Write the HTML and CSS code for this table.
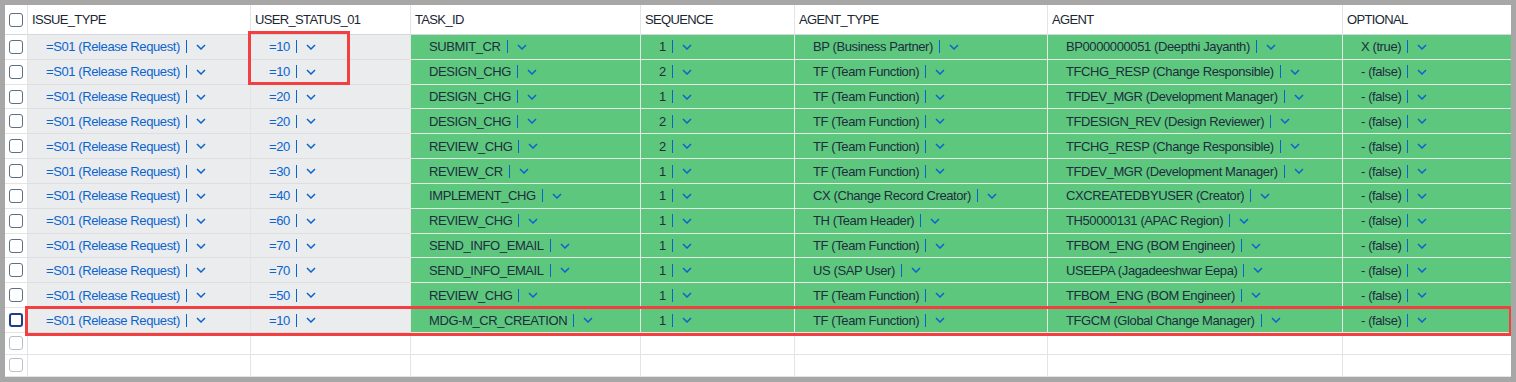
FILE: index.html
```html
<!DOCTYPE html>
<html>
<head>
<meta charset="utf-8">
<link rel="stylesheet" href="styles.css">
</head>
<body>
<div class="table">
  <div class="row head">
    <div class="c cb"><span class="box"></span></div>
    <div class="c">ISSUE_TYPE</div>
    <div class="c">USER_STATUS_01</div>
    <div class="c">TASK_ID</div>
    <div class="c">SEQUENCE</div>
    <div class="c">AGENT_TYPE</div>
    <div class="c">AGENT</div>
    <div class="c">OPTIONAL</div>
  </div>

  <div class="row data">
    <div class="c cb"><span class="box"></span></div>
    <div class="c g"><span class="v">=S01 (Release Request)</span><i class="bar"></i><svg class="chev" viewBox="0 0 10 6"><path d="M1 1l4 4 4-4"/></svg></div>
    <div class="c g"><span class="v">=10</span><i class="bar"></i><svg class="chev" viewBox="0 0 10 6"><path d="M1 1l4 4 4-4"/></svg></div>
    <div class="c k"><span class="v">SUBMIT_CR</span><i class="bar"></i><svg class="chev" viewBox="0 0 10 6"><path d="M1 1l4 4 4-4"/></svg></div>
    <div class="c k"><span class="v">1</span><i class="bar"></i><svg class="chev" viewBox="0 0 10 6"><path d="M1 1l4 4 4-4"/></svg></div>
    <div class="c k"><span class="v">BP (Business Partner)</span><i class="bar"></i><svg class="chev" viewBox="0 0 10 6"><path d="M1 1l4 4 4-4"/></svg></div>
    <div class="c k"><span class="v">BP0000000051 (Deepthi Jayanth)</span><i class="bar"></i><svg class="chev" viewBox="0 0 10 6"><path d="M1 1l4 4 4-4"/></svg></div>
    <div class="c k"><span class="v">X (true)</span><i class="bar"></i><svg class="chev" viewBox="0 0 10 6"><path d="M1 1l4 4 4-4"/></svg></div>
  </div>

  <div class="row data">
    <div class="c cb"><span class="box"></span></div>
    <div class="c g"><span class="v">=S01 (Release Request)</span><i class="bar"></i><svg class="chev" viewBox="0 0 10 6"><path d="M1 1l4 4 4-4"/></svg></div>
    <div class="c g"><span class="v">=10</span><i class="bar"></i><svg class="chev" viewBox="0 0 10 6"><path d="M1 1l4 4 4-4"/></svg></div>
    <div class="c k"><span class="v">DESIGN_CHG</span><i class="bar"></i><svg class="chev" viewBox="0 0 10 6"><path d="M1 1l4 4 4-4"/></svg></div>
    <div class="c k"><span class="v">2</span><i class="bar"></i><svg class="chev" viewBox="0 0 10 6"><path d="M1 1l4 4 4-4"/></svg></div>
    <div class="c k"><span class="v">TF (Team Function)</span><i class="bar"></i><svg class="chev" viewBox="0 0 10 6"><path d="M1 1l4 4 4-4"/></svg></div>
    <div class="c k"><span class="v">TFCHG_RESP (Change Responsible)</span><i class="bar"></i><svg class="chev" viewBox="0 0 10 6"><path d="M1 1l4 4 4-4"/></svg></div>
    <div class="c k"><span class="v">- (false)</span><i class="bar"></i><svg class="chev" viewBox="0 0 10 6"><path d="M1 1l4 4 4-4"/></svg></div>
  </div>

  <div class="row data">
    <div class="c cb"><span class="box"></span></div>
    <div class="c g"><span class="v">=S01 (Release Request)</span><i class="bar"></i><svg class="chev" viewBox="0 0 10 6"><path d="M1 1l4 4 4-4"/></svg></div>
    <div class="c g"><span class="v">=20</span><i class="bar"></i><svg class="chev" viewBox="0 0 10 6"><path d="M1 1l4 4 4-4"/></svg></div>
    <div class="c k"><span class="v">DESIGN_CHG</span><i class="bar"></i><svg class="chev" viewBox="0 0 10 6"><path d="M1 1l4 4 4-4"/></svg></div>
    <div class="c k"><span class="v">1</span><i class="bar"></i><svg class="chev" viewBox="0 0 10 6"><path d="M1 1l4 4 4-4"/></svg></div>
    <div class="c k"><span class="v">TF (Team Function)</span><i class="bar"></i><svg class="chev" viewBox="0 0 10 6"><path d="M1 1l4 4 4-4"/></svg></div>
    <div class="c k"><span class="v">TFDEV_MGR (Development Manager)</span><i class="bar"></i><svg class="chev" viewBox="0 0 10 6"><path d="M1 1l4 4 4-4"/></svg></div>
    <div class="c k"><span class="v">- (false)</span><i class="bar"></i><svg class="chev" viewBox="0 0 10 6"><path d="M1 1l4 4 4-4"/></svg></div>
  </div>

  <div class="row data">
    <div class="c cb"><span class="box"></span></div>
    <div class="c g"><span class="v">=S01 (Release Request)</span><i class="bar"></i><svg class="chev" viewBox="0 0 10 6"><path d="M1 1l4 4 4-4"/></svg></div>
    <div class="c g"><span class="v">=20</span><i class="bar"></i><svg class="chev" viewBox="0 0 10 6"><path d="M1 1l4 4 4-4"/></svg></div>
    <div class="c k"><span class="v">DESIGN_CHG</span><i class="bar"></i><svg class="chev" viewBox="0 0 10 6"><path d="M1 1l4 4 4-4"/></svg></div>
    <div class="c k"><span class="v">2</span><i class="bar"></i><svg class="chev" viewBox="0 0 10 6"><path d="M1 1l4 4 4-4"/></svg></div>
    <div class="c k"><span class="v">TF (Team Function)</span><i class="bar"></i><svg class="chev" viewBox="0 0 10 6"><path d="M1 1l4 4 4-4"/></svg></div>
    <div class="c k"><span class="v">TFDESIGN_REV (Design Reviewer)</span><i class="bar"></i><svg class="chev" viewBox="0 0 10 6"><path d="M1 1l4 4 4-4"/></svg></div>
    <div class="c k"><span class="v">- (false)</span><i class="bar"></i><svg class="chev" viewBox="0 0 10 6"><path d="M1 1l4 4 4-4"/></svg></div>
  </div>

  <div class="row data">
    <div class="c cb"><span class="box"></span></div>
    <div class="c g"><span class="v">=S01 (Release Request)</span><i class="bar"></i><svg class="chev" viewBox="0 0 10 6"><path d="M1 1l4 4 4-4"/></svg></div>
    <div class="c g"><span class="v">=20</span><i class="bar"></i><svg class="chev" viewBox="0 0 10 6"><path d="M1 1l4 4 4-4"/></svg></div>
    <div class="c k"><span class="v">REVIEW_CHG</span><i class="bar"></i><svg class="chev" viewBox="0 0 10 6"><path d="M1 1l4 4 4-4"/></svg></div>
    <div class="c k"><span class="v">2</span><i class="bar"></i><svg class="chev" viewBox="0 0 10 6"><path d="M1 1l4 4 4-4"/></svg></div>
    <div class="c k"><span class="v">TF (Team Function)</span><i class="bar"></i><svg class="chev" viewBox="0 0 10 6"><path d="M1 1l4 4 4-4"/></svg></div>
    <div class="c k"><span class="v">TFCHG_RESP (Change Responsible)</span><i class="bar"></i><svg class="chev" viewBox="0 0 10 6"><path d="M1 1l4 4 4-4"/></svg></div>
    <div class="c k"><span class="v">- (false)</span><i class="bar"></i><svg class="chev" viewBox="0 0 10 6"><path d="M1 1l4 4 4-4"/></svg></div>
  </div>

  <div class="row data">
    <div class="c cb"><span class="box"></span></div>
    <div class="c g"><span class="v">=S01 (Release Request)</span><i class="bar"></i><svg class="chev" viewBox="0 0 10 6"><path d="M1 1l4 4 4-4"/></svg></div>
    <div class="c g"><span class="v">=30</span><i class="bar"></i><svg class="chev" viewBox="0 0 10 6"><path d="M1 1l4 4 4-4"/></svg></div>
    <div class="c k"><span class="v">REVIEW_CR</span><i class="bar"></i><svg class="chev" viewBox="0 0 10 6"><path d="M1 1l4 4 4-4"/></svg></div>
    <div class="c k"><span class="v">1</span><i class="bar"></i><svg class="chev" viewBox="0 0 10 6"><path d="M1 1l4 4 4-4"/></svg></div>
    <div class="c k"><span class="v">TF (Team Function)</span><i class="bar"></i><svg class="chev" viewBox="0 0 10 6"><path d="M1 1l4 4 4-4"/></svg></div>
    <div class="c k"><span class="v">TFDEV_MGR (Development Manager)</span><i class="bar"></i><svg class="chev" viewBox="0 0 10 6"><path d="M1 1l4 4 4-4"/></svg></div>
    <div class="c k"><span class="v">- (false)</span><i class="bar"></i><svg class="chev" viewBox="0 0 10 6"><path d="M1 1l4 4 4-4"/></svg></div>
  </div>

  <div class="row data">
    <div class="c cb"><span class="box"></span></div>
    <div class="c g"><span class="v">=S01 (Release Request)</span><i class="bar"></i><svg class="chev" viewBox="0 0 10 6"><path d="M1 1l4 4 4-4"/></svg></div>
    <div class="c g"><span class="v">=40</span><i class="bar"></i><svg class="chev" viewBox="0 0 10 6"><path d="M1 1l4 4 4-4"/></svg></div>
    <div class="c k"><span class="v">IMPLEMENT_CHG</span><i class="bar"></i><svg class="chev" viewBox="0 0 10 6"><path d="M1 1l4 4 4-4"/></svg></div>
    <div class="c k"><span class="v">1</span><i class="bar"></i><svg class="chev" viewBox="0 0 10 6"><path d="M1 1l4 4 4-4"/></svg></div>
    <div class="c k"><span class="v">CX (Change Record Creator)</span><i class="bar"></i><svg class="chev" viewBox="0 0 10 6"><path d="M1 1l4 4 4-4"/></svg></div>
    <div class="c k"><span class="v">CXCREATEDBYUSER (Creator)</span><i class="bar"></i><svg class="chev" viewBox="0 0 10 6"><path d="M1 1l4 4 4-4"/></svg></div>
    <div class="c k"><span class="v">- (false)</span><i class="bar"></i><svg class="chev" viewBox="0 0 10 6"><path d="M1 1l4 4 4-4"/></svg></div>
  </div>

  <div class="row data">
    <div class="c cb"><span class="box"></span></div>
    <div class="c g"><span class="v">=S01 (Release Request)</span><i class="bar"></i><svg class="chev" viewBox="0 0 10 6"><path d="M1 1l4 4 4-4"/></svg></div>
    <div class="c g"><span class="v">=60</span><i class="bar"></i><svg class="chev" viewBox="0 0 10 6"><path d="M1 1l4 4 4-4"/></svg></div>
    <div class="c k"><span class="v">REVIEW_CHG</span><i class="bar"></i><svg class="chev" viewBox="0 0 10 6"><path d="M1 1l4 4 4-4"/></svg></div>
    <div class="c k"><span class="v">1</span><i class="bar"></i><svg class="chev" viewBox="0 0 10 6"><path d="M1 1l4 4 4-4"/></svg></div>
    <div class="c k"><span class="v">TH (Team Header)</span><i class="bar"></i><svg class="chev" viewBox="0 0 10 6"><path d="M1 1l4 4 4-4"/></svg></div>
    <div class="c k"><span class="v">TH50000131 (APAC Region)</span><i class="bar"></i><svg class="chev" viewBox="0 0 10 6"><path d="M1 1l4 4 4-4"/></svg></div>
    <div class="c k"><span class="v">- (false)</span><i class="bar"></i><svg class="chev" viewBox="0 0 10 6"><path d="M1 1l4 4 4-4"/></svg></div>
  </div>

  <div class="row data">
    <div class="c cb"><span class="box"></span></div>
    <div class="c g"><span class="v">=S01 (Release Request)</span><i class="bar"></i><svg class="chev" viewBox="0 0 10 6"><path d="M1 1l4 4 4-4"/></svg></div>
    <div class="c g"><span class="v">=70</span><i class="bar"></i><svg class="chev" viewBox="0 0 10 6"><path d="M1 1l4 4 4-4"/></svg></div>
    <div class="c k"><span class="v">SEND_INFO_EMAIL</span><i class="bar"></i><svg class="chev" viewBox="0 0 10 6"><path d="M1 1l4 4 4-4"/></svg></div>
    <div class="c k"><span class="v">1</span><i class="bar"></i><svg class="chev" viewBox="0 0 10 6"><path d="M1 1l4 4 4-4"/></svg></div>
    <div class="c k"><span class="v">TF (Team Function)</span><i class="bar"></i><svg class="chev" viewBox="0 0 10 6"><path d="M1 1l4 4 4-4"/></svg></div>
    <div class="c k"><span class="v">TFBOM_ENG (BOM Engineer)</span><i class="bar"></i><svg class="chev" viewBox="0 0 10 6"><path d="M1 1l4 4 4-4"/></svg></div>
    <div class="c k"><span class="v">- (false)</span><i class="bar"></i><svg class="chev" viewBox="0 0 10 6"><path d="M1 1l4 4 4-4"/></svg></div>
  </div>

  <div class="row data">
    <div class="c cb"><span class="box"></span></div>
    <div class="c g"><span class="v">=S01 (Release Request)</span><i class="bar"></i><svg class="chev" viewBox="0 0 10 6"><path d="M1 1l4 4 4-4"/></svg></div>
    <div class="c g"><span class="v">=70</span><i class="bar"></i><svg class="chev" viewBox="0 0 10 6"><path d="M1 1l4 4 4-4"/></svg></div>
    <div class="c k"><span class="v">SEND_INFO_EMAIL</span><i class="bar"></i><svg class="chev" viewBox="0 0 10 6"><path d="M1 1l4 4 4-4"/></svg></div>
    <div class="c k"><span class="v">1</span><i class="bar"></i><svg class="chev" viewBox="0 0 10 6"><path d="M1 1l4 4 4-4"/></svg></div>
    <div class="c k"><span class="v">US (SAP User)</span><i class="bar"></i><svg class="chev" viewBox="0 0 10 6"><path d="M1 1l4 4 4-4"/></svg></div>
    <div class="c k"><span class="v">USEEPA (Jagadeeshwar Eepa)</span><i class="bar"></i><svg class="chev" viewBox="0 0 10 6"><path d="M1 1l4 4 4-4"/></svg></div>
    <div class="c k"><span class="v">- (false)</span><i class="bar"></i><svg class="chev" viewBox="0 0 10 6"><path d="M1 1l4 4 4-4"/></svg></div>
  </div>

  <div class="row data">
    <div class="c cb"><span class="box"></span></div>
    <div class="c g"><span class="v">=S01 (Release Request)</span><i class="bar"></i><svg class="chev" viewBox="0 0 10 6"><path d="M1 1l4 4 4-4"/></svg></div>
    <div class="c g"><span class="v">=50</span><i class="bar"></i><svg class="chev" viewBox="0 0 10 6"><path d="M1 1l4 4 4-4"/></svg></div>
    <div class="c k"><span class="v">REVIEW_CHG</span><i class="bar"></i><svg class="chev" viewBox="0 0 10 6"><path d="M1 1l4 4 4-4"/></svg></div>
    <div class="c k"><span class="v">1</span><i class="bar"></i><svg class="chev" viewBox="0 0 10 6"><path d="M1 1l4 4 4-4"/></svg></div>
    <div class="c k"><span class="v">TF (Team Function)</span><i class="bar"></i><svg class="chev" viewBox="0 0 10 6"><path d="M1 1l4 4 4-4"/></svg></div>
    <div class="c k"><span class="v">TFBOM_ENG (BOM Engineer)</span><i class="bar"></i><svg class="chev" viewBox="0 0 10 6"><path d="M1 1l4 4 4-4"/></svg></div>
    <div class="c k"><span class="v">- (false)</span><i class="bar"></i><svg class="chev" viewBox="0 0 10 6"><path d="M1 1l4 4 4-4"/></svg></div>
  </div>

  <div class="row data">
    <div class="c cb"><span class="box focus"></span></div>
    <div class="c g"><span class="v">=S01 (Release Request)</span><i class="bar"></i><svg class="chev" viewBox="0 0 10 6"><path d="M1 1l4 4 4-4"/></svg></div>
    <div class="c g"><span class="v">=10</span><i class="bar"></i><svg class="chev" viewBox="0 0 10 6"><path d="M1 1l4 4 4-4"/></svg></div>
    <div class="c k"><span class="v">MDG-M_CR_CREATION</span><i class="bar"></i><svg class="chev" viewBox="0 0 10 6"><path d="M1 1l4 4 4-4"/></svg></div>
    <div class="c k"><span class="v">1</span><i class="bar"></i><svg class="chev" viewBox="0 0 10 6"><path d="M1 1l4 4 4-4"/></svg></div>
    <div class="c k"><span class="v">TF (Team Function)</span><i class="bar"></i><svg class="chev" viewBox="0 0 10 6"><path d="M1 1l4 4 4-4"/></svg></div>
    <div class="c k"><span class="v">TFGCM (Global Change Manager)</span><i class="bar"></i><svg class="chev" viewBox="0 0 10 6"><path d="M1 1l4 4 4-4"/></svg></div>
    <div class="c k"><span class="v">- (false)</span><i class="bar"></i><svg class="chev" viewBox="0 0 10 6"><path d="M1 1l4 4 4-4"/></svg></div>
  </div>

  <div class="row empty">
    <div class="c cb"><span class="box light"></span></div>
    <div class="c"></div><div class="c"></div><div class="c"></div><div class="c"></div><div class="c"></div><div class="c"></div><div class="c"></div>
  </div>
  <div class="row empty">
    <div class="c cb"><span class="box light"></span></div>
    <div class="c"></div><div class="c"></div><div class="c"></div><div class="c"></div><div class="c"></div><div class="c"></div><div class="c"></div>
  </div>

  <div class="mark mark-status"></div>
  <div class="mark mark-row"></div>
</div>
</body>
</html>
```

FILE: styles.css
```css
html, body {
  margin: 0;
  padding: 0;
  background: #a7a7a7;
}
body {
  padding: 5px;
  font-family: "Liberation Sans", Arial, sans-serif;
  font-size: 13px;
  color: #1d2d3e;
}
.table {
  position: relative;
  width: 1506px;
  height: 372px;
  background: #fff;
  overflow: hidden;
}
.row {
  display: grid;
  grid-template-columns: 23px 223px 160px 230px 154px 253px 295px 168px;
}
.c {
  box-sizing: border-box;
  border-right: 1px solid #e3e4e6;
  border-bottom: 1px solid #e3e4e6;
  display: flex;
  align-items: center;
  white-space: nowrap;
  overflow: hidden;
}
.c:last-child {
  border-right: none;
}
.head .c {
  height: 30px;
  padding-left: 4px;
  letter-spacing: -0.65px;
  color: #1a2733;
  border-bottom-color: #d5d7da;
}
.head .c.cb,
.c.cb {
  padding: 0;
  justify-content: center;
  background: #fff;
}
.data .c {
  height: 24.83px;
  padding-left: 18px;
}
.data .c.cb {
  padding-left: 0;
}
.empty .c {
  height: 22px;
}
.c.g {
  background: #ebecee;
  color: #0a64d0;
  border-bottom-color: #dcdee1;
}
.c.k {
  background: #5dc77e;
  border-right-color: #e3ebe5;
  border-bottom-color: #e3ebe5;
}
.v {
  letter-spacing: -0.4px;
}
.bar {
  display: inline-block;
  width: 1px;
  height: 13px;
  background: #0a64d0;
  margin-left: 6px;
}
.chev {
  width: 10px;
  height: 6px;
  margin-left: 9px;
  fill: none;
  stroke: #0a64d0;
  stroke-width: 1.5;
}
.box {
  box-sizing: border-box;
  width: 14px;
  height: 14px;
  border: 1px solid #5b6e82;
  border-radius: 3px;
  background: #fff;
}
.box.focus {
  border: 2px solid #1f3e85;
}
.box.light {
  border-color: #b7bfc8;
}
.mark {
  position: absolute;
  border: 3px solid #f23f3f;
  box-sizing: border-box;
  pointer-events: none;
}
.mark-status {
  left: 243px;
  top: 26px;
  width: 102px;
  height: 54px;
}
.mark-row {
  left: 20px;
  top: 301px;
  width: 1487px;
  height: 30px;
}
```
